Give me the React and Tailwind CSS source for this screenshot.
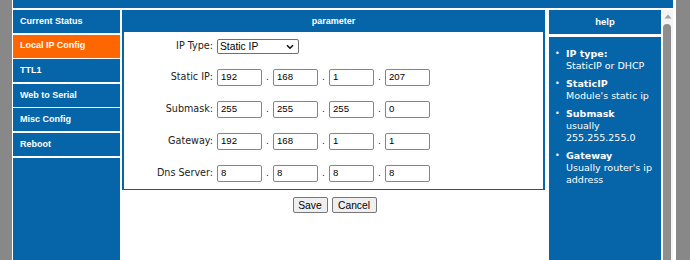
const ipRows = [
  { label: 'Static IP:', parts: ['192', '168', '1', '207'] },
  { label: 'Submask:', parts: ['255', '255', '255', '0'] },
  { label: 'Gateway:', parts: ['192', '168', '1', '1'] },
  { label: 'Dns Server:', parts: ['8', '8', '8', '8'] },
]

const navItems = ['Current Status', 'Local IP Config', 'TTL1', 'Web to Serial', 'Misc Config', 'Reboot']

const helpItems = [
  { title: 'IP type:', lines: ['StaticIP or DHCP'] },
  { title: 'StaticIP', lines: ["Module's static ip"] },
  { title: 'Submask', lines: ['usually', '255.255.255.0'] },
  { title: 'Gateway', lines: ["Usually router's ip", 'address'] },
]

const tahoma = "font-['Liberation_Sans',Arial,sans-serif]"
const verdana = "font-['DejaVu_Sans',Verdana,sans-serif]"

function IpField({ value }) {
  return (
    <div className="flex h-[17px] w-[45px] items-center rounded-[2px] border border-[#858585] bg-white pl-[3px] font-['Liberation_Sans',Arial,sans-serif] text-[9.6px] text-black">
      {value}
    </div>
  )
}

export default function App() {
  return (
    <div className="flex h-[260px] w-[690px] overflow-hidden bg-[#888888]">
      <div className="ml-[12px] flex w-[664px] flex-col bg-white pl-[1px]">
        <div className="h-[8px] w-[660px] bg-[#0565a8]" />
        <div className="mt-[2px] flex flex-1">
          {/* left menu */}
          <nav className="flex w-[107px] flex-col">
            {navItems.map((item) => (
              <div
                key={item}
                className={`mb-[1.6px] flex h-[23px] items-center pl-[7px] ${tahoma} text-[9px] font-bold text-white ${
                  item === 'Local IP Config' ? 'bg-[#fe6602]' : 'bg-[#0565a8]'
                }`}
              >
                {item}
              </div>
            ))}
            <div className="flex-1 bg-[#0565a8]" />
          </nav>

          {/* parameter panel */}
          <section className="ml-[2px] flex w-[425px] flex-col">
            <div className="w-[423px] border-2 border-b-[1.5px] border-[#0565a8] border-b-[#1b5a8e]">
              <div className={`flex h-[20px] items-center justify-center bg-[#0565a8] ${tahoma} text-[9px] font-bold text-white`}>
                parameter
              </div>
              <div className={`${verdana} text-[9.6px] text-[#222]`}>
                <div className="flex h-[29px] items-center">
                  <span className="w-[89px] text-right">IP Type:</span>
                  <div className="ml-[4px] flex h-[15px] w-[82px] items-center justify-between rounded-[2px] border border-[#6f6f6f] bg-white pl-[2px] pr-[4px] font-['Liberation_Sans',Arial,sans-serif] text-[10.3px] text-black">
                    <span>Static IP</span>
                    <svg width="8" height="6" viewBox="0 0 8 6">
                      <polyline points="1,1.2 4,4.2 7,1.2" fill="none" stroke="#111" strokeWidth="1.6" />
                    </svg>
                  </div>
                </div>
                {ipRows.map((row) => (
                  <div key={row.label} className="flex h-[32px] items-center">
                    <span className="w-[89px] text-right">{row.label}</span>
                    <div className="ml-[4px] flex items-center">
                      {row.parts.map((part, i) => (
                        <div key={i} className="flex items-center">
                          {i > 0 ? <span className="w-[11px] pt-[2px] text-center text-[9px]">.</span> : null}
                          <IpField value={part} />
                        </div>
                      ))}
                    </div>
                  </div>
                ))}
              </div>
            </div>
            <div className="mt-[7px] flex justify-center gap-[4px] font-['Liberation_Sans',Arial,sans-serif] text-[10.3px] text-black">
              <button className="h-[16px] w-[35px] rounded-[2px] border border-[#767676] bg-[#efefef]">Save</button>
              <button className="h-[16px] w-[45px] rounded-[2px] border border-[#767676] bg-[#efefef]">Cancel</button>
            </div>
          </section>

          {/* help */}
          <aside className="ml-[2px] flex w-[112px] flex-col">
            <div className={`flex h-[24px] items-center justify-center bg-[#0565a8] ${tahoma} text-[9.5px] font-bold text-white`}>
              help
            </div>
            <div className={`mt-[3px] flex-1 bg-[#0565a8] pl-[6px] pt-[11px] ${verdana} text-[9.5px] leading-[12px] text-white`}>
              {helpItems.map((item) => (
                <div key={item.title} className="mb-[6px] flex">
                  <span className="w-[11px] shrink-0 text-[8px]">•</span>
                  <div>
                    <div className="font-bold">{item.title}</div>
                    {item.lines.map((line) => (
                      <div key={line}>{line}</div>
                    ))}
                  </div>
                </div>
              ))}
            </div>
          </aside>

          {/* scrollbar */}
          <div className="ml-[2px] flex w-[10px] flex-col items-start bg-[#f4f4f4]">
            <svg className="ml-[1px] mt-[4px]" width="8" height="5" viewBox="0 0 8 5">
              <polygon points="4,0.5 7.5,4.5 0.5,4.5" fill="#a3a3a3" />
            </svg>
            <div className="mt-[5px] w-[8px] flex-1 rounded-t-full bg-[#8e8e8e]" />
          </div>
        </div>
      </div>
    </div>
  )
}
